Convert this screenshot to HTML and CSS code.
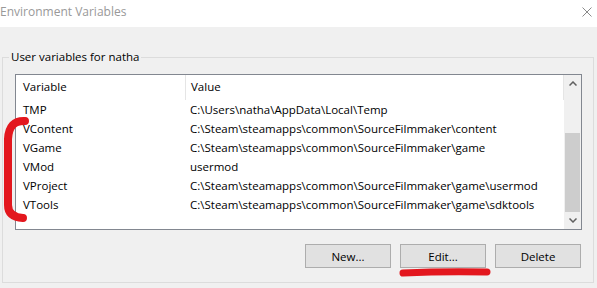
FILE: index.html
```html
<!DOCTYPE html>
<html lang="en">
<head>
  <meta charset="UTF-8">
  <title>Environment Variables</title>
  <link rel="stylesheet" href="styles.css">
</head>
<body>

<div class="titlebar">
  <span class="title">Environment Variables</span>
  <svg class="close" width="10" height="10" viewBox="0 0 10 10">
    <path d="M0.5 0.5 L9.5 9.5 M9.5 0.5 L0.5 9.5" stroke="#8a8a8a" stroke-width="1" fill="none"/>
  </svg>
</div>

<fieldset class="group">
  <legend>User variables for natha</legend>

  <div class="listbox">
    <div class="list">
      <div class="row head">
        <div class="cell name">Variable</div>
        <div class="cell value">Value</div>
      </div>
      <div class="row">
        <div class="cell name">TMP</div>
        <div class="cell value">C:\Users\natha\AppData\Local\Temp</div>
      </div>
      <div class="row">
        <div class="cell name">VContent</div>
        <div class="cell value">C:\Steam\steamapps\common\SourceFilmmaker\content</div>
      </div>
      <div class="row">
        <div class="cell name">VGame</div>
        <div class="cell value">C:\Steam\steamapps\common\SourceFilmmaker\game</div>
      </div>
      <div class="row">
        <div class="cell name">VMod</div>
        <div class="cell value">usermod</div>
      </div>
      <div class="row">
        <div class="cell name">VProject</div>
        <div class="cell value">C:\Steam\steamapps\common\SourceFilmmaker\game\usermod</div>
      </div>
      <div class="row">
        <div class="cell name">VTools</div>
        <div class="cell value">C:\Steam\steamapps\common\SourceFilmmaker\game\sdktools</div>
      </div>
    </div>

    <div class="scrollbar">
      <div class="arrow">
        <svg width="8" height="5" viewBox="0 0 8 5"><path d="M0.5 4.5 L4 1 L7.5 4.5" stroke="#606060" stroke-width="1.5" fill="none"/></svg>
      </div>
      <div class="track"><div class="thumb"></div></div>
      <div class="arrow">
        <svg width="8" height="5" viewBox="0 0 8 5"><path d="M0.5 0.5 L4 4 L7.5 0.5" stroke="#606060" stroke-width="1.5" fill="none"/></svg>
      </div>
    </div>
  </div>

  <div class="buttons">
    <button>New...</button>
    <button>Edit...</button>
    <button>Delete</button>
  </div>
</fieldset>

<!-- red marker scribbles drawn over the dialog -->
<svg class="marks" width="597" height="288" viewBox="0 0 597 288">
  <path d="M25 121 Q9 120 8 139 L8 205 Q8 217 23 218" stroke="#e3171e" stroke-width="8" stroke-linecap="round" fill="none"/>
  <path d="M403 273 Q445 271 487 272" stroke="#e3171e" stroke-width="7" stroke-linecap="round" fill="none"/>
</svg>

</body>
</html>
```

FILE: styles.css
```css
body {
  margin: 0;
  width: 597px;
  height: 288px;
  background: #f0f0f0;
  font-family: 'Open Sans', sans-serif;
  font-size: 11.5px;
  color: #000;
  position: relative;
  overflow: hidden;
}

.titlebar {
  height: 27px;
  background: #fff;
  display: flex;
  justify-content: space-between;
  align-items: flex-start;
  box-sizing: border-box;
  padding: 4px 5px 0 0;
}

.title {
  color: #999;
  font-size: 12px;
  line-height: 16px;
}

.close {
  margin-top: 3px;
}

.group {
  margin: 22px 3px 0 2px;
  padding: 9px 11px 14px 12px;
  border: 1px solid #dcdcdc;
  min-width: 0;
}

.group legend {
  margin-left: -6px;
  padding: 0 2px;
  line-height: 16px;
}

.listbox {
  height: 154px;
  border: 1px solid #828790;
  background: #fff;
  display: flex;
}

.list {
  flex: 1;
}

.row {
  display: flex;
  height: 19px;
  line-height: 20px;
  white-space: nowrap;
}

.row.head {
  height: 25px;
  line-height: 24px;
}

.cell.name {
  width: 162px;
  padding-left: 7px;
}

.cell.value {
  padding-left: 5px;
}

.head .cell.name {
  border-right: 1px solid #e5e5e5;
}

.head .cell.value {
  flex: 1;
  border-right: 1px solid #e5e5e5;
}

.scrollbar {
  width: 17px;
  background: #f0f0f0;
  display: flex;
  flex-direction: column;
}

.arrow {
  height: 17px;
  display: flex;
  align-items: center;
  justify-content: center;
}

.track {
  flex: 1;
  display: flex;
  flex-direction: column;
  justify-content: flex-end;
}

.thumb {
  height: 79px;
  margin: 0 1px;
  background: #cdcdcd;
}

.buttons {
  display: flex;
  justify-content: flex-end;
  gap: 9px;
  margin-top: 14px;
  margin-right: 1px;
}

button {
  width: 86px;
  height: 24px;
  padding: 0;
  background: #e1e1e1;
  border: 1px solid #adadad;
  border-radius: 0;
  font-family: 'Open Sans', sans-serif;
  font-size: 11.5px;
  color: #000;
}

.marks {
  position: absolute;
  top: 0;
  left: 0;
  pointer-events: none;
}
```
